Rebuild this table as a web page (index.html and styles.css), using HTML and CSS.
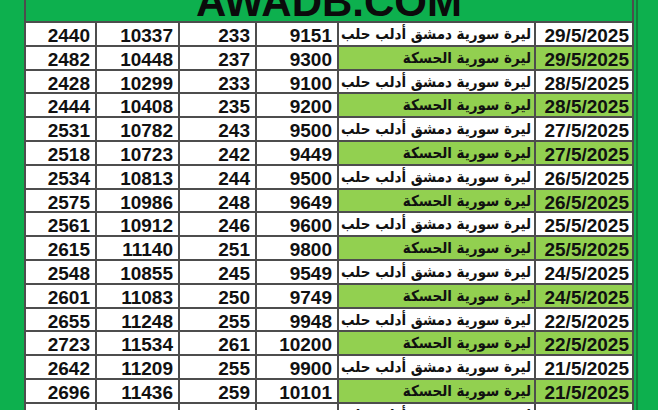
FILE: index.html
```html
<!DOCTYPE html>
<html lang="ar">
<head>
<meta charset="utf-8">
<link rel="stylesheet" href="styles.css">
</head>
<body>
<div class="page">
  <div class="side-left"></div>
  <div class="sheet">
    <div class="title"><span class="title-text">AWADB.COM</span></div>

    <div class="c n">2440</div><div class="c n">10337</div><div class="c n">233</div><div class="c n">9151</div><div class="c ar"><span dir="rtl">ليرة سورية دمشق أدلب حلب</span></div><div class="c d">29/5/2025</div>
    <div class="c n">2482</div><div class="c n">10448</div><div class="c n">237</div><div class="c n">9300</div><div class="c ar g"><span dir="rtl">ليرة سورية الحسكة</span></div><div class="c d g">29/5/2025</div>
    <div class="c n">2428</div><div class="c n">10299</div><div class="c n">233</div><div class="c n">9100</div><div class="c ar"><span dir="rtl">ليرة سورية دمشق أدلب حلب</span></div><div class="c d">28/5/2025</div>
    <div class="c n">2444</div><div class="c n">10408</div><div class="c n">235</div><div class="c n">9200</div><div class="c ar g"><span dir="rtl">ليرة سورية الحسكة</span></div><div class="c d g">28/5/2025</div>
    <div class="c n">2531</div><div class="c n">10782</div><div class="c n">243</div><div class="c n">9500</div><div class="c ar"><span dir="rtl">ليرة سورية دمشق أدلب حلب</span></div><div class="c d">27/5/2025</div>
    <div class="c n">2518</div><div class="c n">10723</div><div class="c n">242</div><div class="c n">9449</div><div class="c ar g"><span dir="rtl">ليرة سورية الحسكة</span></div><div class="c d g">27/5/2025</div>
    <div class="c n">2534</div><div class="c n">10813</div><div class="c n">244</div><div class="c n">9500</div><div class="c ar"><span dir="rtl">ليرة سورية دمشق أدلب حلب</span></div><div class="c d">26/5/2025</div>
    <div class="c n">2575</div><div class="c n">10986</div><div class="c n">248</div><div class="c n">9649</div><div class="c ar g"><span dir="rtl">ليرة سورية الحسكة</span></div><div class="c d g">26/5/2025</div>
    <div class="c n">2561</div><div class="c n">10912</div><div class="c n">246</div><div class="c n">9600</div><div class="c ar"><span dir="rtl">ليرة سورية دمشق أدلب حلب</span></div><div class="c d">25/5/2025</div>
    <div class="c n">2615</div><div class="c n">11140</div><div class="c n">251</div><div class="c n">9800</div><div class="c ar g"><span dir="rtl">ليرة سورية الحسكة</span></div><div class="c d g">25/5/2025</div>
    <div class="c n">2548</div><div class="c n">10855</div><div class="c n">245</div><div class="c n">9549</div><div class="c ar"><span dir="rtl">ليرة سورية دمشق أدلب حلب</span></div><div class="c d">24/5/2025</div>
    <div class="c n">2601</div><div class="c n">11083</div><div class="c n">250</div><div class="c n">9749</div><div class="c ar g"><span dir="rtl">ليرة سورية الحسكة</span></div><div class="c d g">24/5/2025</div>
    <div class="c n">2655</div><div class="c n">11248</div><div class="c n">255</div><div class="c n">9948</div><div class="c ar"><span dir="rtl">ليرة سورية دمشق أدلب حلب</span></div><div class="c d">22/5/2025</div>
    <div class="c n">2723</div><div class="c n">11534</div><div class="c n">261</div><div class="c n">10200</div><div class="c ar g"><span dir="rtl">ليرة سورية الحسكة</span></div><div class="c d g">22/5/2025</div>
    <div class="c n">2642</div><div class="c n">11209</div><div class="c n">255</div><div class="c n">9900</div><div class="c ar"><span dir="rtl">ليرة سورية دمشق أدلب حلب</span></div><div class="c d">21/5/2025</div>
    <div class="c n">2696</div><div class="c n">11436</div><div class="c n">259</div><div class="c n">10101</div><div class="c ar g"><span dir="rtl">ليرة سورية الحسكة</span></div><div class="c d g">21/5/2025</div>
    <div class="c n">2668</div><div class="c n">11320</div><div class="c n">256</div><div class="c n">9950</div><div class="c ar"><span dir="rtl">ليرة سورية دمشق أدلب حلب</span></div><div class="c d">20/5/2025</div>
  </div>
  <div class="side-right"></div>
</div>
</body>
</html>
```

FILE: styles.css
```css
html, body {
  margin: 0;
  padding: 0;
  background: #0db04e;
  overflow: hidden;
}

.page {
  display: flex;
  align-items: flex-start;
  width: 658px;
  height: 410px;
  overflow: hidden;
}

.side-left {
  width: 24px;
  flex: none;
}

.sheet {
  flex: none;
  display: grid;
  grid-template-columns: 69px 81px 75px 80px 195px 96px;
  grid-template-rows: 21px repeat(17, 21.8px);
  gap: 2px;
  padding: 0 2px 2px 2px;
  background: #4d4d4d;
  width: 610px;
  box-sizing: border-box;
}

.side-right {
  flex: none;
  width: 20px;
  height: 410px;
  margin-left: 2px;
  border-left: 2px solid #167a3c;
}

.title {
  grid-column: 1 / -1;
  background: #0db04e;
  overflow: hidden;
  display: flex;
  justify-content: center;
}

.title-text {
  display: block;
  margin-top: -9px;
  font-family: "Liberation Sans", Arial, sans-serif;
  font-weight: bold;
  font-size: 42px;
  line-height: 21px;
  color: #0b0b0b;
}

.c {
  background: #ffffff;
  display: flex;
  align-items: flex-start;
  justify-content: flex-end;
  padding: 3px 5px 0 0;
  font-family: "Liberation Sans", Arial, sans-serif;
  font-weight: bold;
  font-size: 19px;
  line-height: 19px;
  color: #111111;
  white-space: nowrap;
  min-width: 0;
}

.c.d {
  padding-right: 3px;
}

.c.ar {
  padding-right: 3px;
  padding-top: 1px;
  font-family: "DejaVu Sans Condensed", "DejaVu Sans", sans-serif;
  font-size: 15px;
  line-height: 20px;
}

.c.g {
  background: #92d050;
}
```
